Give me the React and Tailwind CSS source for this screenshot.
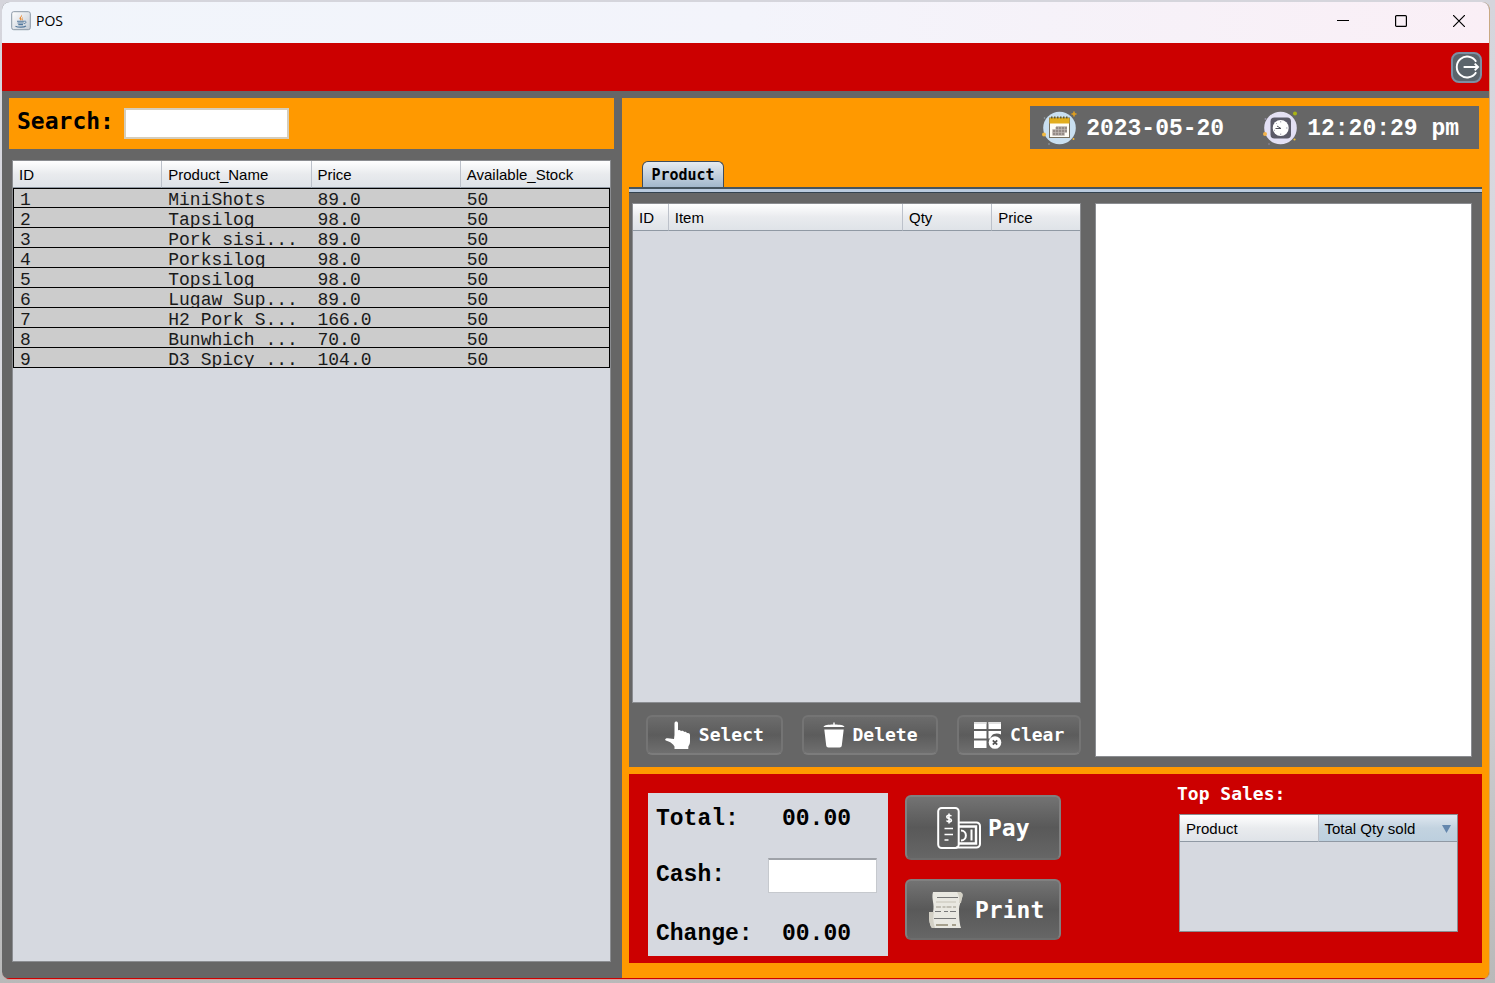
import React from "react";

const SANS = "font-['Liberation_Sans',Arial,sans-serif]";
const MONO = "font-['Liberation_Mono','Courier_New',monospace]";
const TECH = "font-['DejaVu_Sans_Mono',monospace]";

const PRODUCTS = [
  ["1", "MiniShots", "89.0", "50"],
  ["2", "Tapsilog", "98.0", "50"],
  ["3", "Pork sisi...", "89.0", "50"],
  ["4", "Porksilog", "98.0", "50"],
  ["5", "Topsilog", "98.0", "50"],
  ["6", "Lugaw Sup...", "89.0", "50"],
  ["7", "H2 Pork S...", "166.0", "50"],
  ["8", "Bunwhich ...", "70.0", "50"],
  ["9", "D3 Spicy ...", "104.0", "50"],
];

function JavaIcon() {
  return (
    <svg className="size-5" viewBox="0 0 20 20" aria-hidden="true">
      <defs>
        <linearGradient id="java-bg" x1="0" y1="0" x2="1" y2="1">
          <stop offset="0" stopColor="#ffffff" />
          <stop offset="1" stopColor="#c3cbd4" />
        </linearGradient>
      </defs>
      <rect x=".7" y=".7" width="18.6" height="18" rx="2" fill="url(#java-bg)" stroke="#8b98a6" />
      <path d="M10.6 3.2c1 1.8-3.3 3-1.8 5 .5.7 1.1 1 .9 1.7 1.5-1.4.4-2.2.2-3 0-1.200 2-1.700.7-3.700z" fill="#e8862c" />
      <path d="M12.2 6c-2 1-1.700 1.700-1.100 2.700.5.7 0 1.300-.5 1.600 2.200-1 .9-2 .8-2.700 0-.6.4-1 .8-1.600z" fill="#e8862c" />
      <path d="M6 10.200h7.500M6.500 12h6.200M7.300 13.600h4.700M4.500 15.200c2.500 1.300 8.500 1.200 10.500-.2" stroke="#53789c" strokeWidth="1.100" fill="none" />
      <path d="M13.500 10.200c2.200-.3 2.100 1.900-.4 2.500" stroke="#53789c" strokeWidth=".9" fill="none" />
    </svg>
  );
}

function CalendarIcon() {
  return (
    <svg className="h-9 w-9" viewBox="0 0 36 36" aria-hidden="true">
      <circle cx="17.500" cy="18" r="16.300" fill="#c9dff0" />
      <path d="M32 1.500v5M29.500 4h5" stroke="#e2a01e" strokeWidth="1.600" />
      <circle cx="2" cy="24.500" r="2" fill="#f0b840" />
      <circle cx="31.500" cy="29" r="1" fill="#f0b840" />
      <circle cx="2.500" cy="8" r=".8" fill="#9aa6ae" />
      <circle cx="7" cy="34" r=".8" fill="#9aa6ae" />
      <rect x="7.500" y="8" width="20" height="19.500" fill="#fffdf5" stroke="#77705f" />
      <rect x="7.500" y="8" width="20" height="5.500" fill="#e2ad1c" />
      <path d="M9 7.500h17" stroke="#6b5a1f" strokeWidth="2" strokeDasharray="1.500 1.500" />
      <path d="M14 16.500h11v6h-2.500v3h-12v-6H14z" fill="#948b86" />
      <path d="M10.500 19.500h14.500M10.500 22.500h14.500M13.500 17v8.500M16.500 17v8.500M19.500 17v8.500M22.500 17v8.500" stroke="#c4bdb8" strokeWidth=".6" />
    </svg>
  );
}

function ClockIcon() {
  return (
    <svg className="h-9 w-9" viewBox="0 0 36 36" aria-hidden="true">
      <circle cx="17.500" cy="18" r="16.300" fill="#e3e0f4" />
      <circle cx="32" cy="3.500" r="2" fill="#a9b414" />
      <circle cx="2" cy="24" r="2" fill="#f2b24a" />
      <circle cx="31.500" cy="29.500" r="1.100" fill="#e9bd3d" />
      <circle cx="2.500" cy="9" r="1" fill="#9590a4" />
      <circle cx="6" cy="34" r=".8" fill="#9590a4" />
      <rect x="7.500" y="7.500" width="20.500" height="21" rx="4" fill="#5b5a68" />
      <circle cx="17.700" cy="18" r="8" fill="#fff" />
      <path d="M18 18.500h-5.500M18 18.500l-4-2.500" stroke="#55555f" strokeWidth="1" />
      <path d="M17.700 11v1.500M17.700 23.500V25M23 18h1.500M11 20l1 .5M13 13l.8.8" stroke="#a5a5b0" strokeWidth="1" />
    </svg>
  );
}

function LogoutIcon() {
  return (
    <svg className="size-7" viewBox="0 0 28 28" aria-hidden="true" fill="none" stroke="#fff" strokeWidth="2">
      <path d="M24 8.500A10.800 10.800 0 1 0 24 19.500" />
      <path d="M11 14h15M22.500 10.500L26 14l-3.500 3.500" />
    </svg>
  );
}

function HandIcon() {
  return (
    <svg className="h-7 w-[26px]" viewBox="0 0 26 28" fill="#fff" aria-hidden="true">
      <path d="M9.500 2.200C9.500-.2 13-.2 13 2.200V9.500c1-.7 2.400-.4 3 .7 1-.7 2.600-.4 3.100.8 1-.5 2.500 0 2.800 1.200 1.500-.7 3.100.1 3.100 1.800v6.500c0 2.500-1 3.500-1.700 5.200V28H9.500v-2.500c-1.500-2.500-3.500-4-6-5L.8 19.500c-1.600-1 .2-2.600 2-2.200l6.200.7.500-4z" />
    </svg>
  );
}

function TrashIcon() {
  return (
    <svg className="h-[26px] w-[22px]" viewBox="0 0 22 26" fill="#fff" aria-hidden="true">
      <path d="M10.300 2.500V.5h1.400v2c5 .1 9 .5 9.800 2.500H.5c.8-2 4.800-2.400 9.800-2.500zM1.300 7.500h19.400l-1.900 16c-.2 1.300-.9 2-2.200 2H5.400c-1.300 0-2-.7-2.200-2z" />
    </svg>
  );
}

function ClearIcon() {
  return (
    <svg className="h-7 w-7" viewBox="0 0 28 28" aria-hidden="true">
      <g fill="#fff">
        <path d="M0 1h12.500v7H0zM14.500 1H27v7H14.500zM0 10h12.500v7.500H0zM14.500 10H27v3.500c-3-1.500-7.500-1.500-9.500 1.500-.7.8-1 1.500-1.200 2.500h-1.800zM0 19.500h12.500v7.500H0z" />
        <circle cx="21" cy="21.500" r="6.300" />
      </g>
      <path d="M18.800 19.300l4.400 4.400M23.200 19.300l-4.400 4.400" stroke="#555" strokeWidth="1.800" />
      <path d="M0 2h12.500M14.500 2H27" stroke="#d5d5d5" strokeWidth="1.500" />
    </svg>
  );
}

function PayIcon() {
  return (
    <svg className="h-[42px] w-[44px]" viewBox="0 0 44 42" fill="none" stroke="#fff" aria-hidden="true">
      <rect x="1.200" y="1" width="20.500" height="40" rx="3.500" strokeWidth="2" />
      <path d="M22 15.500h17.500a3.500 3.500 0 0 1 3.500 3.500v18a3.500 3.500 0 0 1-3.500 3.500H19" strokeWidth="2" />
      <path d="M22 19.500h17v17H22" strokeWidth="2.400" />
      <path d="M24 23.500c6.500 0 6.500 10 0 10M34.500 22.500v11" strokeWidth="2" />
      <path d="M14.300 9.300c-.5-1.500-4.500-1.500-4.500.6 0 2 4.600 1.200 4.600 3.300s-4.200 2-4.800.3M12 6.500v10" strokeWidth="1.600" />
      <path d="M7.500 21.500H16M7.500 27.500H16M7.500 33h4" strokeWidth="1.700" />
    </svg>
  );
}

function ReceiptIcon() {
  return (
    <svg className="h-[38px] w-[34px]" viewBox="0 0 34 38" aria-hidden="true">
      <path d="M4 1h27c3 1 3 3 2 6-1 4-3 7-3 11s0 13 2 19H3C0 33 0 27 0 21h4C6 13 2 8 4 1z" fill="#e9e8e1" />
      <path d="M0 21h5c-1 5-1 9 1 16H3c-3-4-3-10-3-16zM31 1c3 1 3 3 2 6l-1 5h-2c1-4 0-8-2-11z" fill="#d3d0c5" />
      <path d="M8 6.500h21M5 27.500h22" stroke="#777" strokeWidth="1.200" />
      <path d="M7 16h21" stroke="#b5b1a7" strokeWidth="1.500" strokeDasharray="5 1.500 3 1" />
      <path d="M6 20.500h22" stroke="#777" strokeWidth="1.200" strokeDasharray="6 3 4 2" />
      <path d="M7 11h20" stroke="#c5c2b6" strokeWidth="1" />
      <path d="M7 34h12M23 34h4" stroke="#a59f8c" strokeWidth="2.200" />
    </svg>
  );
}

const HEADER_PLAIN = "from-white via-[#e9ebee] to-[#dfe3e8]";
const HEADER_SORTED = "from-[#dfe8f0] via-[#c3d3e0] to-[#bccfde]";

function HeaderCell({ children, sorted = false }) {
  return (
    <th
      scope="col"
      aria-sort={sorted ? "descending" : undefined}
      className={`h-[27px] border-r border-b border-r-[#bcc1ca] border-b-[#9099a4] bg-linear-to-b px-[6px] pt-[2px] text-left text-[15px] leading-5 font-normal last:border-r-0 ${sorted ? HEADER_SORTED : HEADER_PLAIN}`}
    >
      {children}
    </th>
  );
}

function ActionButton({ icon, label, className }) {
  return (
    <button
      type="button"
      className={`flex h-10 items-center justify-center gap-2 rounded-md border-2 border-[#747474] border-b-[#7c7c7c] bg-linear-to-b from-[#6c6c6c] via-[#5c5c5c] to-[#6f6f6f] text-lg leading-6 font-bold text-white ${TECH} ${className}`}
    >
      {icon}
      {label}
    </button>
  );
}

function BigButton({ icon, label, className }) {
  return (
    <button
      type="button"
      className={`flex w-full items-center rounded-md border-2 border-[#808080] border-b-[#6d6d6d] bg-linear-to-b from-[#737373] via-[#595959] to-[#666] text-[23px] leading-7 font-bold text-white ${TECH} ${className}`}
    >
      {icon}
      {label}
    </button>
  );
}

function TitleBar() {
  return (
    <header className="flex h-[41px] items-center justify-between bg-linear-to-r from-[#f1f5fb] via-[#f3f4fb] to-[#faeff6] pr-3 pb-[3px] pl-[9px]">
      <div className="flex items-center gap-[5px]">
        <JavaIcon />
        <span className="font-['Open_Sans',sans-serif] text-sm leading-5 text-black">POS</span>
      </div>
      <div className="flex items-center gap-[22px]">
        <button type="button" aria-label="Minimize" className="flex size-9 items-center justify-center">
          <svg className="size-3" viewBox="0 0 12 12" stroke="#000"><path d="M0 5.500h12" /></svg>
        </button>
        <button type="button" aria-label="Maximize" className="flex size-9 items-center justify-center">
          <svg className="size-3" viewBox="0 0 12 12" fill="none" stroke="#000" strokeWidth="1.200"><rect x=".6" y=".6" width="10.800" height="10.800" rx="1" /></svg>
        </button>
        <button type="button" aria-label="Close" className="flex size-9 items-center justify-center">
          <svg className="size-3" viewBox="0 0 12 12" stroke="#000" strokeWidth="1.200"><path d="M0 0l12 12M12 0L0 12" /></svg>
        </button>
      </div>
    </header>
  );
}

function StockPanel() {
  return (
    <section className="flex min-w-0 flex-col pl-[7px]">
      <div className="mr-2 flex h-[51px] items-center bg-[#ff9900] pl-2">
        <label htmlFor="search" className={`mr-[10px] pb-[5px] text-[23px] leading-7 font-bold text-black ${TECH}`}>
          Search:
        </label>
        <input id="search" className="h-[31px] w-[165px] border-2 border-[#d5cdbb] bg-white px-1 outline-none" />
      </div>
      <div className="mt-[11px] mr-[11px] mb-4 ml-[3px] flex-1 border border-[#8b8d91] bg-[#d6d9e0]">
        <table className={`w-full table-fixed border-separate border-spacing-0 ${SANS}`}>
          <thead>
            <tr>
              <HeaderCell>ID</HeaderCell>
              <HeaderCell>Product_Name</HeaderCell>
              <HeaderCell>Price</HeaderCell>
              <HeaderCell>Available_Stock</HeaderCell>
            </tr>
          </thead>
          <tbody className={`bg-[#cccccc] text-lg text-[#1a1a1a] ${MONO}`}>
            {PRODUCTS.map((row, i) => (
              <tr key={row[0]}>
                {row.map((cell, j) => (
                  <td
                    key={j}
                    className={`border-b border-black p-0 first:border-l last:border-r ${i === 0 ? "border-t" : ""}`}
                  >
                    <div
                      className={`px-[6px] whitespace-nowrap ${j === 1 ? "overflow-hidden" : ""} ${i === 0 ? "h-[18px] leading-[22px]" : "h-[19px] leading-6"}`}
                    >
                      {cell}
                    </div>
                  </td>
                ))}
              </tr>
            ))}
          </tbody>
        </table>
      </div>
    </section>
  );
}

function OrderPanel() {
  return (
    <div className="flex flex-1 flex-col">
      <div role="tablist" className="flex pl-[13px]">
        <button
          type="button"
          role="tab"
          aria-selected="true"
          className={`h-[26px] w-[82px] rounded-t-md border border-b-0 border-[#3f4d5c] bg-linear-to-b from-[#e6ebf0] to-[#a3b8cc] text-[15px] leading-5 font-bold text-black ${TECH}`}
        >
          Product
        </button>
      </div>
      <div className="h-[6px] border-t-2 border-b border-t-[#45545f] border-b-[#33424f] bg-[#b9cade]" />
      <div className="grid flex-1 grid-cols-[minmax(0,449fr)_minmax(0,377fr)] gap-[14px] bg-[#666666] pt-[10px] pr-[10px] pb-[10px] pl-[3px]">
        <div className="flex min-w-0 flex-col">
          <div className="flex-1 border border-[#8b8d91] bg-[#d6d9e0]">
            <table className={`w-full table-fixed border-separate border-spacing-0 ${SANS}`}>
              <colgroup>
                <col className="w-[8%]" />
                <col className="w-[52.4%]" />
                <col className="w-[20%]" />
                <col />
              </colgroup>
              <thead>
                <tr>
                  <HeaderCell>ID</HeaderCell>
                  <HeaderCell>Item</HeaderCell>
                  <HeaderCell>Qty</HeaderCell>
                  <HeaderCell>Price</HeaderCell>
                </tr>
              </thead>
            </table>
          </div>
          <div className="mt-3 mb-[2px] grid grid-cols-[136fr_136fr_123fr] gap-[19px] pl-[14px]">
            <ActionButton icon={<HandIcon />} label="Select" />
            <ActionButton icon={<TrashIcon />} label="Delete" />
            <ActionButton icon={<ClearIcon />} label="Clear" />
          </div>
        </div>
        <textarea
          aria-label="Receipt"
          className="resize-none border border-[#8b8d91] bg-white p-2 outline-none"
        />
      </div>
    </div>
  );
}

function CheckoutPanel() {
  return (
    <div className="mt-[7px] flex h-[189px] items-start justify-between bg-[#cc0000] pr-6 pl-[19px]">
      <div className="flex gap-[17px] pt-[19px]">
        <div className={`grid h-[163px] w-[240px] grid-cols-[112px_1fr] grid-rows-[52px_60px_1fr] items-center bg-[#d6d9e0] px-2 text-[23px] leading-7 font-bold text-black ${MONO}`}>
          <span>Total:</span>
          <span className="pl-[14px]">00.00</span>
          <label htmlFor="cash">Cash:</label>
          <input
            id="cash"
            className="h-[35px] w-[109px] border border-t-2 border-[#c6c9ce] border-t-[#9fa2a8] bg-white px-1 outline-none"
          />
          <span className="pt-[6px]">Change:</span>
          <span className="pt-[6px] pl-[14px]">00.00</span>
        </div>
        <div className="flex w-[156px] flex-col gap-[19px] pt-[2px]">
          <BigButton icon={<PayIcon />} label="Pay" className="h-[65px] gap-[7px] pl-[30px]" />
          <BigButton icon={<ReceiptIcon />} label="Print" className="h-[61px] gap-3 pl-[22px]" />
        </div>
      </div>
      <div className="w-[281px] pt-2">
        <h2 className={`text-lg leading-6 font-bold text-white ${TECH}`}>Top Sales:</h2>
        <div className="mt-2 ml-[2px] h-[118px] border border-[#8b8d91] bg-[#d6d9e0]">
          <table className={`w-full table-fixed border-separate border-spacing-0 ${SANS}`}>
            <thead>
              <tr>
                <HeaderCell>Product</HeaderCell>
                <HeaderCell sorted>
                  <span className="flex items-center justify-between whitespace-nowrap">
                    Total Qty sold
                    <svg className="h-2 w-[9px]" viewBox="0 0 9 8" fill="#6487ad" aria-hidden="true"><path d="M0 0h9L4.500 8z" /></svg>
                  </span>
                </HeaderCell>
              </tr>
            </thead>
          </table>
        </div>
      </div>
    </div>
  );
}

export default function App() {
  return (
    <div className="flex min-h-screen flex-col bg-linear-to-b from-[#d5d5dc] via-[#dcdce2] to-[#b9b9b9] pt-[2px] pr-[5px] pb-[3px] pl-[2px]">
      <div className="flex flex-1 flex-col overflow-hidden rounded-lg border-r border-b border-r-[#c9a983] border-b-[#d9a0a0] bg-[#666666]">
        <TitleBar />
        <div className="flex h-12 items-center justify-end bg-[#cc0000] pr-[7px]">
          <button
            type="button"
            aria-label="Log out"
            className="flex size-[31px] items-center justify-center rounded-lg border-2 border-[#7d8fa3] bg-[#5b646b]"
          >
            <LogoutIcon />
          </button>
        </div>
        <main className="grid flex-1 grid-cols-[minmax(0,620fr)_minmax(0,867fr)] border-b border-[#cc0000] pt-[7px]">
          <StockPanel />
          <section className="flex min-w-0 flex-col bg-[#ff9900] pt-2 pr-[7px] pb-[15px] pl-[7px]">
            <div className={`mr-[3px] mb-3 flex h-[43px] items-center self-end bg-[#666666] pr-5 pl-3 text-[23px] leading-7 font-bold text-white ${MONO}`}>
              <CalendarIcon />
              <time className="mr-[39px] ml-2 pt-[2px]">2023-05-20</time>
              <ClockIcon />
              <time className="ml-2 pt-[2px]">12:20:29 pm</time>
            </div>
            <OrderPanel />
            <CheckoutPanel />
          </section>
        </main>
      </div>
    </div>
  );
}
